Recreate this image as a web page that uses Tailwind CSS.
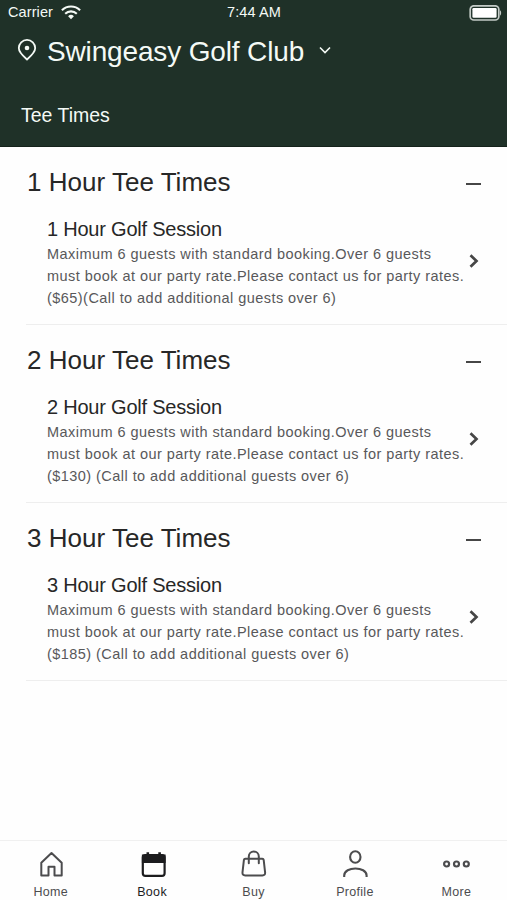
<!DOCTYPE html>
<html lang="en">
<head>
    <meta charset="UTF-8">
    <meta name="viewport" content="width=device-width, initial-scale=1.0">
    <title>Swingeasy Golf Club</title>
    <script src="https://cdn.jsdelivr.net/npm/@tailwindcss/browser@4"></script>
</head>
<body class="bg-[#fefefe] font-['Liberation_Sans',Arial,sans-serif] text-[#272727]">
    <div class="flex flex-col w-full h-screen overflow-hidden">
        <header class="h-[147px] shrink-0 bg-[#1f3128] text-[#f4faf6] border-b border-[#15221b]">
            <!-- Status bar -->
            <div class="grid grid-cols-3 items-center h-[25px] pl-2 pr-1 text-[14.5px]">
                <div class="flex items-center gap-2">
                    <span class="tracking-[0.1px]">Carrier</span>
                    <svg class="w-5 h-[15px]" viewBox="0 0 20 15" fill="none" stroke="currentColor" stroke-width="2.1">
                        <path d="M.9 5.2a13 13 0 0 1 18.2 0M4.2 8.7a8.3 8.3 0 0 1 11.6 0"/>
                        <path d="M10 14.2 7.1 11.3a4.1 4.1 0 0 1 5.8 0Z" fill="currentColor" stroke="none"/>
                    </svg>
                </div>
                <span class="text-center pr-[3px] tracking-[0.1px]">7:44 AM</span>
                <svg class="justify-self-end w-[34px] h-4" viewBox="0 0 34 16" fill="none">
                    <rect x="1.2" y=".8" width="28.6" height="14.2" rx="3.6" stroke="#c3cac6" stroke-width="1.7"/>
                    <rect x="3.4" y="3" width="24.2" height="9.8" rx="1.2" fill="#fff"/>
                    <path d="M31 5.2c1.5.7 1.5 4.7 0 5.4Z" fill="#c3cac6"/>
                </svg>
            </div>

            <div class="flex items-center h-[53px] pl-[17px]">
                <svg class="w-5 h-6 mb-1" viewBox="0 0 20 24" fill="none" stroke="currentColor" stroke-width="1.8">
                    <path d="M10 21.500C6.500 18.500 1.800 14.600 1.800 10.100a8.200 8.200 0 0 1 16.400 0C18.200 14.600 13.500 18.500 10 21.500Z" stroke-linejoin="round"/>
                    <circle cx="10" cy="10" r="2.300" fill="currentColor" stroke="none"/>
                </svg>
                <h1 class="ml-[10px] text-[28px] tracking-[-0.15px] whitespace-nowrap">Swingeasy Golf Club</h1>
                <svg class="ml-[15px] mb-[3px] w-3 h-3" viewBox="0 0 12 12" fill="none" stroke="currentColor" stroke-width="1.600">
                    <path d="m1 3.500 5 5 5-5"/>
                </svg>
            </div>

            <p class="mt-[25px] pl-[21px] text-[19.5px] leading-6">Tee Times</p>
        </header>

        <main id="sessions" class="flex-1"></main>

        <nav class="grid grid-cols-5 h-[60px] shrink-0 border-t border-[#f0f0f0] text-[12.5px] tracking-[0.3px] text-[#4c4c4e]">
            <a class="flex flex-col items-center pt-2">
                <svg class="w-7 h-8" viewBox="0 0 28 32" fill="none" stroke="currentColor" stroke-width="2" stroke-linejoin="round">
                    <path d="M14.500 4 4.300 13.800V26.500h7.200v-8.700h6v8.700h7.200V13.800Z"/>
                </svg>
                <span class="leading-5 pt-px">Home</span>
            </a>
            <a class="flex flex-col items-center pt-2 text-[#1c1c1e]">
                <svg class="w-7 h-8" viewBox="0 0 28 32" fill="none" stroke="currentColor" stroke-width="2.200">
                    <rect x="4.800" y="6" width="21.800" height="20.800" rx="2.600"/>
                    <path d="M5 6.500h21.500v6.500H5Z" fill="currentColor"/>
                    <path d="M9.800 3.200V7M21.600 3.200V7" stroke-width="2.600"/>
                </svg>
                <span class="leading-5 pt-px">Book</span>
            </a>
            <a class="flex flex-col items-center pt-2">
                <svg class="w-7 h-8" viewBox="0 0 28 32" fill="none" stroke="currentColor" stroke-width="2" stroke-linecap="round" stroke-linejoin="round">
                    <path d="M6.300 9.800h17q1.200 0 1.400 1.200l1.400 12.300q.300 3.200-2.700 3.200H6.200q-3 0-2.700-3.200l1.400-12.300q.200-1.200 1.400-1.200Z"/>
                    <path d="M9.800 14.300V7.600a5 5 0 0 1 10 0v6.700"/>
                </svg>
                <span class="leading-5 pt-px">Buy</span>
            </a>
            <a class="flex flex-col items-center pt-2">
                <svg class="w-7 h-8" viewBox="0 0 28 32" fill="none" stroke="currentColor" stroke-width="2.100">
                    <ellipse cx="14.300" cy="8" rx="5.200" ry="5.800"/>
                    <path d="M3.200 28v-1.500c0-9.300 22.400-9.300 22.400 0V28"/>
                </svg>
                <span class="leading-5 pt-px">Profile</span>
            </a>
            <a class="flex flex-col items-center pt-2">
                <svg class="w-7 h-8" viewBox="0 0 28 32" fill="none" stroke="currentColor" stroke-width="2.200">
                    <circle cx="4.600" cy="15" r="2.500"/>
                    <circle cx="14.500" cy="15" r="2.500"/>
                    <circle cx="24.300" cy="15" r="2.500"/>
                </svg>
                <span class="leading-5 pt-px">More</span>
            </a>
        </nav>
    </div>

    <script>
        const sessions = [
            { hours: 1, price: "($65)(Call to add additional guests over 6)" },
            { hours: 2, price: "($130) (Call to add additional guests over 6)" },
            { hours: 3, price: "($185) (Call to add additional guests over 6)" }
        ];

        document.getElementById("sessions").innerHTML = sessions.map(session => `
            <section class="ml-[26px] h-[178px] pt-[17px] border-b border-[#eeeeee]">
                <div class="flex items-center justify-between h-9 pl-px pr-[26px]">
                    <h2 class="text-[26px] tracking-[0.02px]">${session.hours} Hour Tee Times</h2>
                    <span class="w-[15px] h-0.5 mt-[3px] bg-[#464646]"></span>
                </div>
                <div class="flex items-center mt-[17px] pl-[21px]">
                    <div class="w-[422px]">
                        <h3 class="text-[20px] leading-6 tracking-[-0.22px]">${session.hours} Hour Golf Session</h3>
                        <p class="mt-0.5 text-[14.5px] leading-[22px] tracking-[0.45px] text-[#58585a] whitespace-nowrap">
                            Maximum 6 guests with standard booking.Over 6 guests<br>
                            must book at our party rate.Please contact us for party rates.<br>
                            ${session.price}
                        </p>
                    </div>
                    <svg class="w-[10px] h-4 mb-[5px]" viewBox="0 0 10 16" fill="none" stroke="#464646" stroke-width="2.700">
                        <path d="m1.500 2.200 6 5.800-6 5.800"/>
                    </svg>
                </div>
            </section>
        `).join("");
    </script>
</body>
</html>
